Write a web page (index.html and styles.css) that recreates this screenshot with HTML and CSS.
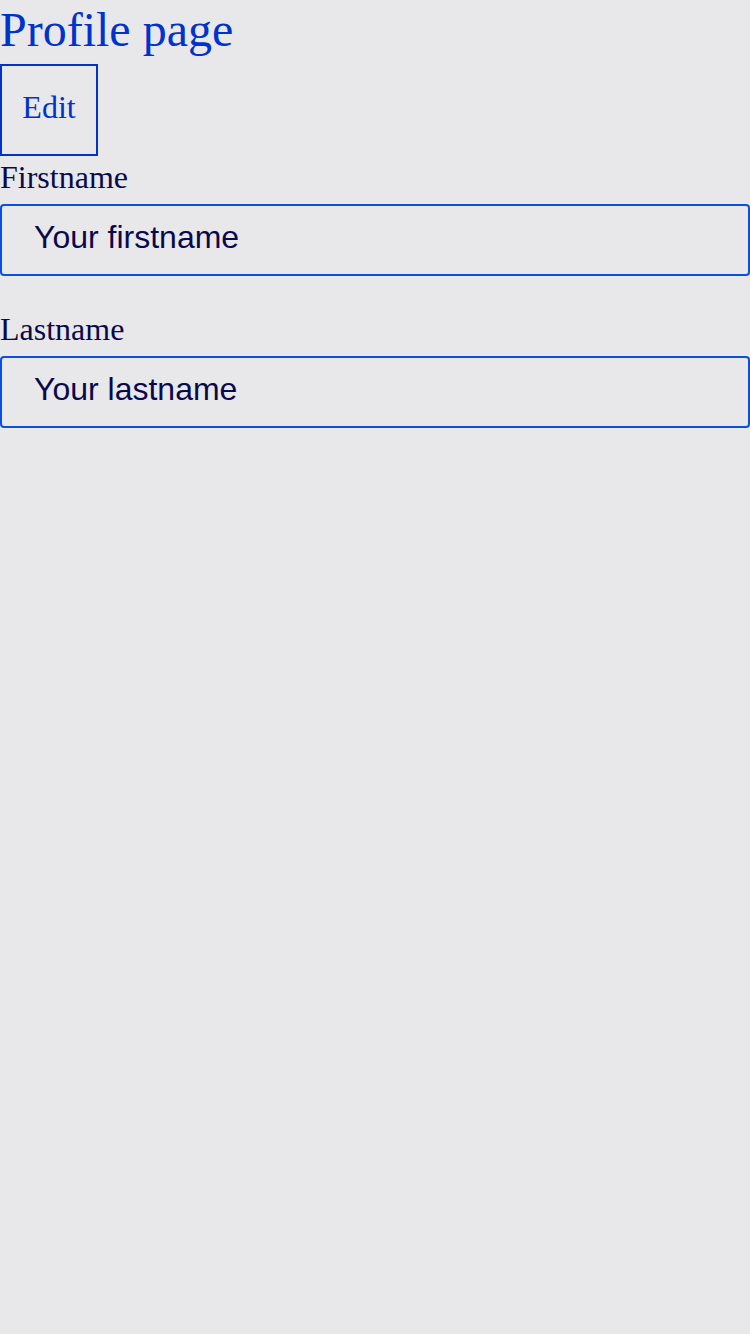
FILE: index.html
```html
<!DOCTYPE html>
<html lang="en">
<head>
<meta charset="utf-8">
<title>Profile page</title>
<link rel="stylesheet" href="styles.css">
</head>
<body>
<main class="page">
  <h1 class="title">Profile page</h1>
  <button class="edit-btn" type="button">Edit</button>
  <form class="form">
    <div class="field">
      <label class="label" for="firstname">Firstname</label>
      <input class="input" id="firstname" type="text" value="Your firstname">
    </div>
    <div class="field">
      <label class="label" for="lastname">Lastname</label>
      <input class="input" id="lastname" type="text" value="Your lastname">
    </div>
  </form>
</main>
</body>
</html>
```

FILE: styles.css
```css
html, body {
  margin: 0;
  padding: 0;
  background: #e8e8ea;
}
body {
  font-family: "Liberation Serif", "Times New Roman", serif;
  min-height: 1334px;
}
.page {
  display: flex;
  flex-direction: column;
  align-items: flex-start;
}
.title {
  margin: 0 0 4px 0;
  font-size: 48px;
  font-weight: normal;
  line-height: 60px;
  color: #0033cc;
}
.edit-btn {
  box-sizing: border-box;
  height: 92px;
  width: 98px;
  padding: 0;
  border: 2px solid #0033cc;
  background: transparent;
  color: #0033cc;
  font-family: "Liberation Serif", "Times New Roman", serif;
  font-size: 32px;
  line-height: 36px;
  padding-bottom: 6px;
}
.form {
  align-self: stretch;
  display: flex;
  flex-direction: column;
  gap: 32px;
  margin: 0;
}
.field {
  display: flex;
  flex-direction: column;
  gap: 7px;
  padding-top: 1px;
}
.label {
  font-size: 32px;
  line-height: 40px;
  color: #0a0a4a;
}
.input {
  box-sizing: border-box;
  width: 100%;
  height: 72px;
  margin: 0;
  padding: 0 32px 6px 32px;
  border: 2px solid #0a4fe0;
  border-radius: 4px;
  background: transparent;
  color: #0a0a4a;
  font-family: "Liberation Sans", Arial, sans-serif;
  font-size: 32px;
  outline: none;
}
```
